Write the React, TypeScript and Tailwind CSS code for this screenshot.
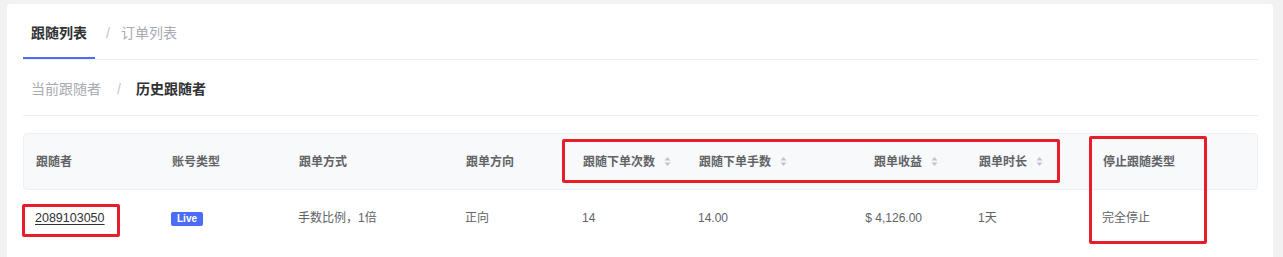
const SortIcon = () => (
  <svg width="7" height="11" viewBox="0 0 7 11" className="ml-[9px] shrink-0">
    <path d="M3.5 1 L6.5 4.5 L0.5 4.5 Z" fill="#c0c4cc" />
    <path d="M3.5 10 L6.5 6.5 L0.5 6.5 Z" fill="#c0c4cc" />
  </svg>
);

const columns = [
  { label: "跟随者", w: "w-[136px]" },
  { label: "账号类型", w: "w-[127px]" },
  { label: "跟单方式", w: "w-[167px]" },
  { label: "跟单方向", w: "w-[117px]" },
  { label: "跟随下单次数", w: "w-[116px]", sort: true },
  { label: "跟随下单手数", w: "w-[167px]", sort: true },
  { label: "跟单收益", w: "w-[113px]", sort: true, right: true },
  { label: "跟单时长", w: "w-[124px]", sort: true },
  { label: "停止跟随类型", w: "w-[167px]" },
];

const App = () => {
  return (
    <div
      className="relative h-[257px] w-full overflow-hidden bg-[#f2f2f2] pl-[7px] pr-[10px] pt-[4px]"
      style={{ fontFamily: '"Liberation Sans", "Noto Sans CJK SC", sans-serif' }}
    >
      <div className="h-[300px] rounded-[4px] bg-white pl-[16px] pr-[15px]">
        {/* 顶部标签 */}
        <div className="flex h-[56px] items-start border-b border-[#ebedf0]">
          <div className="flex h-[55px] flex-col items-center justify-between border-b-2 border-[#4a6cf7] px-[8px] pt-[19px]">
            <span className="text-[14px] leading-[20px] font-semibold text-[#303133]">跟随列表</span>
          </div>
          <span className="ml-[11px] pt-[19px] text-[14px] leading-[20px] text-[#c0c4cc]">/</span>
          <span className="ml-[11px] pt-[19px] text-[14px] leading-[20px] text-[#a8abb2]">订单列表</span>
        </div>

        {/* 当前 / 历史 */}
        <div className="flex h-[56px] items-start border-b border-[#ebedf0] pl-[8px] pt-[19px]">
          <span className="text-[14px] leading-[20px] text-[#a8abb2]">当前跟随者</span>
          <span className="ml-[16px] text-[14px] leading-[20px] text-[#c0c4cc]">/</span>
          <span className="ml-[15px] text-[14px] leading-[20px] font-semibold text-[#303133]">历史跟随者</span>
        </div>

        {/* 表格 */}
        <div className="mt-[17px]">
          <div className="flex h-[57px] items-center rounded-[4px] border border-[#eef0f4] bg-[#f8f9fb]">
            {columns.map((c) => (
              <div
                key={c.label}
                className={`${c.w} flex shrink-0 items-center ${c.right ? "justify-end pr-[29px]" : "pl-[12px]"} text-[12px] font-semibold text-[#606266]`}
              >
                <span>{c.label}</span>
                {c.sort && <SortIcon />}
              </div>
            ))}
          </div>
          <div className="flex h-[56px] items-center text-[12px] text-[#606266]">
            <div className="w-[136px] shrink-0 pl-[12px]">
              <span className="text-[12.5px] text-[#303133] underline underline-offset-2">2089103050</span>
            </div>
            <div className="w-[127px] shrink-0 pl-[12px]">
              <span className="inline-flex h-[14px] items-center rounded-[2px] bg-[#4a6cf7] px-[6px] text-[10px] font-bold text-white">
                Live
              </span>
            </div>
            <div className="w-[167px] shrink-0 pl-[12px]">手数比例，1倍</div>
            <div className="w-[117px] shrink-0 pl-[12px]">正向</div>
            <div className="w-[116px] shrink-0 pl-[12px]">14</div>
            <div className="w-[167px] shrink-0 pl-[12px]">14.00</div>
            <div className="w-[113px] shrink-0 pr-[44px] text-right">$ 4,126.00</div>
            <div className="w-[124px] shrink-0 pl-[12px]">1天</div>
            <div className="w-[167px] shrink-0 pl-[12px]">完全停止</div>
          </div>
        </div>
      </div>

      {/* 标注框 */}
      <div className="absolute left-[562px] top-[139px] h-[44px] w-[498px] rounded-[2px] border-[3px] border-[#e61e2b]" />
      <div className="absolute left-[1089px] top-[136px] h-[108px] w-[118px] rounded-[2px] border-[3px] border-[#e61e2b]" />
      <div className="absolute left-[22px] top-[204px] h-[33px] w-[98px] rounded-[2px] border-[3px] border-[#e61e2b]" />
    </div>
  );
};

export default App;
